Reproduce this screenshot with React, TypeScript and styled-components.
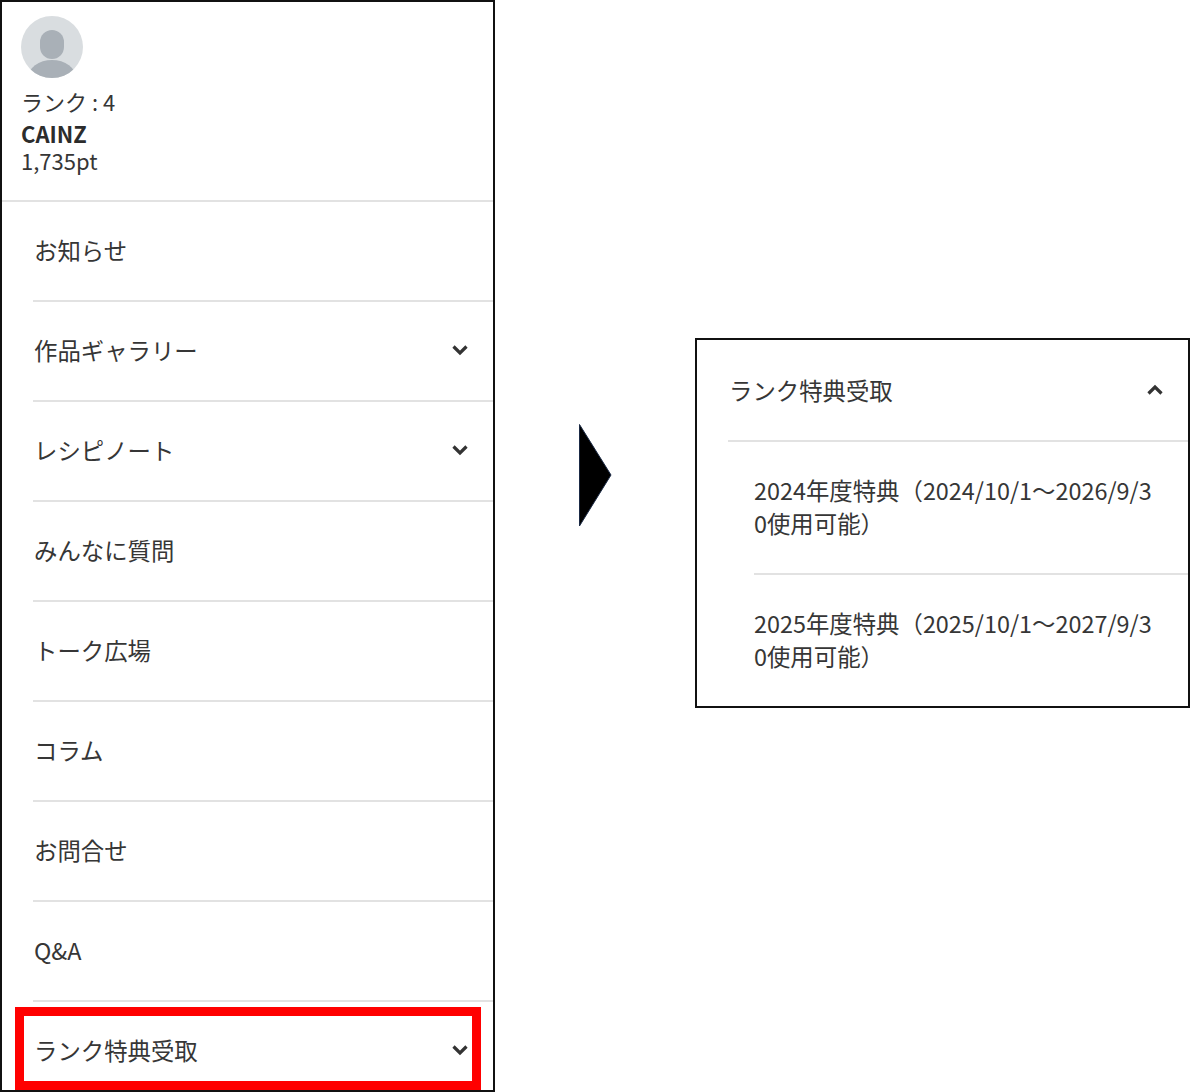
import React from "react";
import styled, { createGlobalStyle } from "styled-components";

const Global = createGlobalStyle`
  html, body { margin: 0; padding: 0; background: #fff; }
  * { box-sizing: border-box; }
  body { font-family: "Noto Sans CJK JP", "Noto Sans", sans-serif; color: #363636; }
`;

const Page = styled.div`
  display: flex;
  align-items: flex-start;
  width: 1190px;
  height: 1092px;
  overflow: hidden;
`;

const Panel = styled.div`
  position: relative;
  width: 495px;
  height: 1092px;
  flex: none;
  border: 2px solid #111;
  background: #fff;
`;

const Profile = styled.div`
  height: 200px;
  padding: 14px 0 0 19px;
  border-bottom: 2px solid #e2e2e2;
`;

const Avatar = styled.svg`
  display: block;
  width: 62px;
  height: 62px;
`;

const Rank = styled.div`
  margin: 7px 0 1px;
  font-size: 22px;
  line-height: 32px;
`;

const Name = styled.div`
  font-size: 22px;
  line-height: 30px;
  font-weight: 700;
  color: #2c2c2c;
`;

const Points = styled.div`
  font-size: 22px;
  line-height: 24px;
`;

const MenuList = styled.ul`
  list-style: none;
  margin: 0;
  padding: 0 0 0 31px;
`;

const MenuRow = styled.li<{ $last?: boolean }>`
  display: flex;
  align-items: center;
  justify-content: space-between;
  height: 100px;
  padding: 0 24px 2px 1px;
  font-size: 23.4px;
  border-bottom: 2px solid ${(p) => (p.$last ? "transparent" : "#e2e2e2")};
`;

const Highlight = styled.div`
  position: absolute;
  left: 13px;
  top: 1005px;
  width: 466px;
  height: 83px;
  border: 9px solid #ff0000;
  pointer-events: none;
`;

const ArrowSlot = styled.div`
  flex: none;
  width: 200px;
  height: 1092px;
  display: flex;
  align-items: center;
  padding: 0 0 141px 84px;
`;

const Arrow = styled.svg`
  display: block;
  width: 33px;
  height: 103px;
`;

const DetailPanel = styled.div`
  flex: none;
  width: 495px;
  height: 370px;
  margin-top: 338px;
  border: 2px solid #111;
  background: #fff;
  padding-left: 31px;
`;

const DetailHead = styled.div`
  display: flex;
  align-items: center;
  justify-content: space-between;
  height: 102px;
  padding: 0 24px 0 1px;
  font-size: 23.4px;
  border-bottom: 2px solid #e2e2e2;
`;

const SubList = styled.ul`
  list-style: none;
  margin: 0;
  padding: 0 0 0 26px;
`;

const SubRow = styled.li<{ $last?: boolean }>`
  height: 133px;
  padding: 32px 29px 0 0;
  font-size: 23.4px;
  line-height: 33px;
  word-break: break-all;
  border-bottom: ${(p) => (p.$last ? "none" : "2px solid #e2e2e2")};
`;

const ChevronSvg = styled.svg`
  display: block;
  width: 18px;
  height: 12px;
  flex: none;
`;

const Chevron = ({ up }: { up?: boolean }) => (
  <ChevronSvg viewBox="0 0 18 12">
    <path
      d={up ? "M2.5 9.5 9 3l6.5 6.5" : "M2.5 2.5 9 9l6.5-6.5"}
      fill="none"
      stroke="#333"
      strokeWidth="3.2"
    />
  </ChevronSvg>
);

const items: { label: string; chevron?: boolean }[] = [
  { label: "お知らせ" },
  { label: "作品ギャラリー", chevron: true },
  { label: "レシピノート", chevron: true },
  { label: "みんなに質問" },
  { label: "トーク広場" },
  { label: "コラム" },
  { label: "お問合せ" },
  { label: "Q&A" },
  { label: "ランク特典受取", chevron: true },
];

export default function App() {
  return (
    <Page>
      <Global />
      <Panel>
        <Profile>
          <Avatar viewBox="0 0 62 62">
            <defs>
              <clipPath id="avatar-clip">
                <circle cx="31" cy="31" r="31" />
              </clipPath>
            </defs>
            <circle cx="31" cy="31" r="31" fill="#d9dde0" />
            <g clipPath="url(#avatar-clip)" fill="#a9b0b7">
              <rect x="19" y="14" width="24" height="29" rx="12" />
              <ellipse cx="31" cy="62" rx="24" ry="18" />
            </g>
          </Avatar>
          <Rank>ランク : 4</Rank>
          <Name>CAINZ</Name>
          <Points>1,735pt</Points>
        </Profile>
        <MenuList>
          {items.map((it, i) => (
            <MenuRow key={it.label} $last={i === items.length - 1}>
              <span>{it.label}</span>
              {it.chevron && <Chevron />}
            </MenuRow>
          ))}
        </MenuList>
        <Highlight />
      </Panel>
      <ArrowSlot>
        <Arrow viewBox="0 0 33 103">
          <path d="M0.5 0.5 32 51 0.5 102z" fill="#000" stroke="#1b2a45" strokeWidth="1" />
        </Arrow>
      </ArrowSlot>
      <DetailPanel>
        <DetailHead>
          <span>ランク特典受取</span>
          <Chevron up />
        </DetailHead>
        <SubList>
          <SubRow>2024年度特典（2024/10/1～2026/9/30使用可能）</SubRow>
          <SubRow $last>2025年度特典（2025/10/1～2027/9/30使用可能）</SubRow>
        </SubList>
      </DetailPanel>
    </Page>
  );
}
